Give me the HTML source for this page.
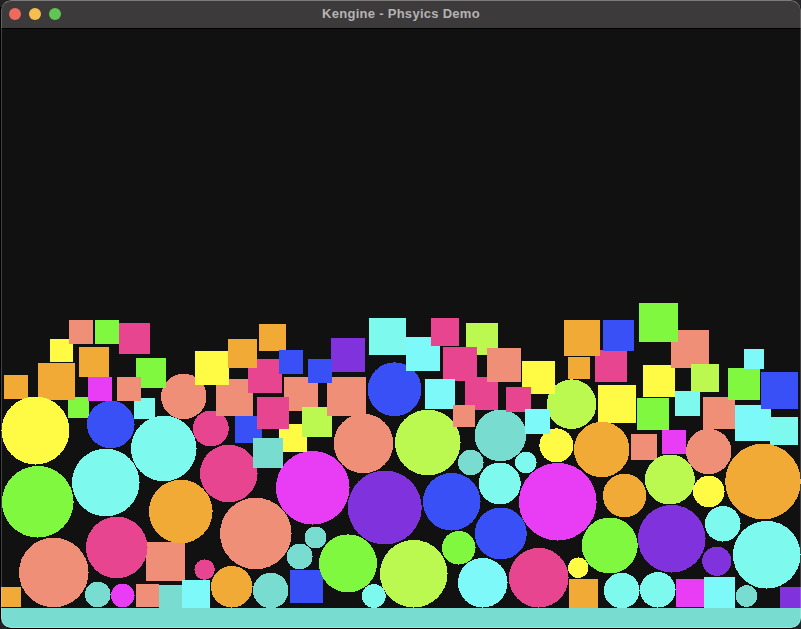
<!DOCTYPE html>
<html><head><meta charset="utf-8"><title>Kengine - Phsyics Demo</title>
<style>
html,body{margin:0;padding:0;background:#000;}
.cn{position:absolute;width:7px;height:7px;background:#222224;}
body{width:801px;height:629px;overflow:hidden;position:relative;font-family:"Liberation Sans",sans-serif;}
.win{position:absolute;left:1px;top:0;width:800px;height:628px;border-radius:10px;background:#111111;overflow:hidden;}
.bar{position:absolute;left:0;top:0;width:100%;height:28px;background:#3c3a3b;border-bottom:1px solid #000;box-sizing:content-box;}
.tl{position:absolute;top:8px;width:12px;height:12px;border-radius:50%;}
.title{position:absolute;left:0;top:0;width:100%;height:28px;line-height:27px;text-align:center;color:#b5b3b4;font-weight:bold;font-size:13px;letter-spacing:0.28px;}
.ground{position:absolute;left:0;top:608px;width:100%;height:20px;background:#78dcd0;}
.edge{position:absolute;left:0;top:0;width:100%;height:100%;box-sizing:border-box;border-radius:10px;border:1px solid rgba(255,255,255,0.2);border-top-color:rgba(255,255,255,0.33);border-bottom-color:rgba(255,255,255,0.3);pointer-events:none;}
svg{position:absolute;left:0;top:0;}
</style></head><body>
<div class="cn" style="left:0;top:0"></div><div class="cn" style="left:794px;top:0;background:#25272b"></div><div class="cn" style="left:0;top:622px"></div><div class="cn" style="left:794px;top:622px"></div>
<div class="win">
<svg width="801" height="629" viewBox="1 0 801 629" shape-rendering="crispEdges">
<circle cx="183.75" cy="396.5" r="22.75" fill="#ef8f78"/>
<circle cx="210.75" cy="428.5" r="18" fill="#e84590"/>
<rect x="50" y="339" width="23" height="23" fill="#fffb45"/>
<rect x="69" y="320" width="24" height="24" fill="#ef8f78"/>
<rect x="95" y="320" width="24" height="24" fill="#80f840"/>
<rect x="119" y="323" width="31" height="31" fill="#e84590"/>
<rect x="79" y="347" width="30" height="30" fill="#f0aa35"/>
<rect x="68" y="397" width="21" height="21" fill="#80f840"/>
<rect x="38" y="363" width="37" height="37" fill="#f0aa35"/>
<rect x="4" y="375" width="24" height="24" fill="#f0aa35"/>
<rect x="88" y="377" width="24" height="24" fill="#e83cf5"/>
<rect x="136" y="358" width="30" height="30" fill="#80f840"/>
<rect x="134" y="398" width="21" height="21" fill="#7ef9ee"/>
<rect x="117" y="377" width="24" height="24" fill="#ef8f78"/>
<rect x="259" y="324" width="27" height="27" fill="#f0aa35"/>
<rect x="216" y="379" width="37" height="37" fill="#ef8f78"/>
<rect x="195" y="351" width="34" height="34" fill="#fffb45"/>
<rect x="284" y="377" width="34" height="34" fill="#ef8f78"/>
<rect x="248" y="359" width="34" height="34" fill="#e84590"/>
<rect x="228" y="339" width="29" height="29" fill="#f0aa35"/>
<rect x="279" y="350" width="24" height="24" fill="#3850f5"/>
<rect x="331" y="338" width="34" height="34" fill="#8033dc"/>
<rect x="369" y="318" width="37" height="37" fill="#7ef9ee"/>
<rect x="235" y="416" width="27" height="27" fill="#3850f5"/>
<rect x="279" y="424" width="28" height="28" fill="#fffb45"/>
<rect x="257" y="397" width="32" height="32" fill="#e84590"/>
<rect x="302" y="407" width="30" height="30" fill="#bbf950"/>
<rect x="327" y="377" width="39" height="39" fill="#ef8f78"/>
<rect x="308" y="359" width="24" height="24" fill="#3850f5"/>
<rect x="431" y="318" width="28" height="28" fill="#e84590"/>
<rect x="466" y="323" width="32" height="32" fill="#bbf950"/>
<rect x="443" y="347" width="34" height="34" fill="#e84590"/>
<rect x="465" y="377" width="33" height="33" fill="#e84590"/>
<rect x="487" y="348" width="34" height="34" fill="#ef8f78"/>
<rect x="425" y="379" width="30" height="30" fill="#7df9f9"/>
<rect x="568" y="357" width="22" height="22" fill="#f0aa35"/>
<rect x="643" y="365" width="32" height="32" fill="#fffb45"/>
<rect x="671" y="330" width="38" height="38" fill="#ef8f78"/>
<rect x="639" y="303" width="39" height="39" fill="#80f840"/>
<rect x="595" y="350" width="32" height="32" fill="#e84590"/>
<rect x="603" y="320" width="31" height="31" fill="#3850f5"/>
<rect x="564" y="320" width="36" height="36" fill="#f0aa35"/>
<rect x="691" y="364" width="28" height="28" fill="#bbf950"/>
<rect x="598" y="385" width="38" height="38" fill="#fffb45"/>
<rect x="637" y="398" width="32" height="32" fill="#80f840"/>
<rect x="675" y="391" width="25" height="25" fill="#7ef9ee"/>
<rect x="703" y="397" width="32" height="32" fill="#ef8f78"/>
<rect x="728" y="368" width="32" height="32" fill="#80f840"/>
<rect x="744" y="349" width="20" height="20" fill="#7df9f9"/>
<rect x="735" y="405" width="36" height="36" fill="#7df9f9"/>
<rect x="761" y="372" width="37" height="37" fill="#3850f5"/>
<rect x="770" y="417" width="28" height="28" fill="#7ef9ee"/>
<rect x="631" y="434" width="26" height="26" fill="#ef8f78"/>
<rect x="662" y="430" width="24" height="24" fill="#e83cf5"/>
<rect x="1" y="587" width="20" height="20" fill="#f0aa35"/>
<rect x="146" y="542" width="39" height="39" fill="#ef8f78"/>
<rect x="136" y="584" width="23" height="23" fill="#ef8f78"/>
<rect x="159" y="585" width="23" height="23" fill="#78dcd0"/>
<rect x="182" y="580" width="28" height="28" fill="#7df9f9"/>
<rect x="290" y="570" width="33" height="33" fill="#3850f5"/>
<rect x="569" y="579" width="29" height="29" fill="#f0aa35"/>
<rect x="676" y="579" width="28" height="28" fill="#e83cf5"/>
<rect x="704" y="577" width="31" height="31" fill="#7df9f9"/>
<rect x="780" y="587" width="21" height="21" fill="#8033dc"/>
<circle cx="35.5" cy="430.5" r="34" fill="#fffb45"/>
<circle cx="110.75" cy="424.5" r="23.8" fill="#3850f5"/>
<circle cx="163.75" cy="448.5" r="32.8" fill="#7ef9ee"/>
<circle cx="394.6" cy="389.3" r="26.9" fill="#3850f5"/>
<circle cx="363.5" cy="443.5" r="29.8" fill="#ef8f78"/>
<circle cx="500.4" cy="435.4" r="25.8" fill="#78dcd0"/>
<circle cx="571.6" cy="404.2" r="24.8" fill="#bbf950"/>
<circle cx="556.4" cy="445.4" r="17" fill="#fffb45"/>
<circle cx="601.75" cy="449.5" r="27.75" fill="#f0aa35"/>
<circle cx="708.75" cy="451.5" r="22.7" fill="#ef8f78"/>
<circle cx="37.75" cy="501.75" r="35.8" fill="#80f840"/>
<circle cx="105.75" cy="482.5" r="33.8" fill="#7ef9ee"/>
<circle cx="180.75" cy="511.5" r="31.8" fill="#f0aa35"/>
<circle cx="116.75" cy="547.5" r="30.8" fill="#e84590"/>
<circle cx="53.75" cy="572.5" r="34.8" fill="#ef8f78"/>
<circle cx="97.75" cy="594.5" r="12.8" fill="#78dcd0"/>
<circle cx="122.75" cy="595.5" r="11.8" fill="#e83cf5"/>
<circle cx="228.75" cy="473.5" r="28.8" fill="#e84590"/>
<circle cx="312.75" cy="487.75" r="36.8" fill="#e83cf5"/>
<circle cx="384.75" cy="507.5" r="37" fill="#8033dc"/>
<circle cx="255.75" cy="533.5" r="35.8" fill="#ef8f78"/>
<circle cx="315.5" cy="537.6" r="10.9" fill="#78dcd0"/>
<circle cx="299.7" cy="556.5" r="12.9" fill="#78dcd0"/>
<circle cx="348" cy="563.4" r="29" fill="#80f840"/>
<circle cx="204.6" cy="569.6" r="10.25" fill="#e84590"/>
<circle cx="231.75" cy="586.75" r="20.8" fill="#f0aa35"/>
<circle cx="270.75" cy="590.5" r="17.75" fill="#78dcd0"/>
<circle cx="373.75" cy="596" r="11.9" fill="#7ef9ee"/>
<circle cx="427.75" cy="442.5" r="32.8" fill="#bbf950"/>
<circle cx="470.75" cy="462.5" r="12.8" fill="#78dcd0"/>
<circle cx="525.75" cy="462.5" r="10.8" fill="#7ef9ee"/>
<circle cx="451.75" cy="501.75" r="28.8" fill="#3850f5"/>
<circle cx="499.75" cy="483.5" r="21" fill="#7ef9ee"/>
<circle cx="557.75" cy="501.75" r="38.8" fill="#e83cf5"/>
<circle cx="500.75" cy="533.5" r="26" fill="#3850f5"/>
<circle cx="458.75" cy="547.75" r="16.8" fill="#80f840"/>
<circle cx="413.75" cy="573.75" r="33.8" fill="#bbf950"/>
<circle cx="482.75" cy="582.75" r="24.8" fill="#7df9f9"/>
<circle cx="538.75" cy="577.75" r="29.8" fill="#e84590"/>
<circle cx="578.25" cy="567.75" r="10.3" fill="#fffb45"/>
<circle cx="763" cy="481.5" r="37.8" fill="#f0aa35"/>
<circle cx="624.6" cy="495.5" r="21.7" fill="#f0aa35"/>
<circle cx="669.9" cy="479.5" r="25" fill="#bbf950"/>
<circle cx="708.75" cy="491.5" r="15.8" fill="#fffb45"/>
<circle cx="609.75" cy="545.5" r="28" fill="#80f840"/>
<circle cx="671.75" cy="538.75" r="33.8" fill="#8033dc"/>
<circle cx="722.75" cy="523.75" r="17.8" fill="#7ef9ee"/>
<circle cx="716.75" cy="561.25" r="14.6" fill="#8033dc"/>
<circle cx="766.75" cy="554.75" r="33.8" fill="#7ef9ee"/>
<circle cx="621.75" cy="590.5" r="17.8" fill="#7ef9ee"/>
<circle cx="657.75" cy="589.75" r="17.8" fill="#7ef9ee"/>
<circle cx="746.6" cy="596.1" r="10.8" fill="#78dcd0"/>
<rect x="253" y="438" width="30" height="30" fill="#78dcd0"/>
<rect x="406" y="337" width="34" height="34" fill="#7df9f9"/>
<rect x="431" y="318" width="28" height="28" fill="#e84590"/>
<rect x="453" y="405" width="22" height="22" fill="#ef8f78"/>
<rect x="522" y="361" width="33" height="33" fill="#fffb45"/>
<rect x="506" y="387" width="25" height="25" fill="#e84590"/>
<rect x="525" y="409" width="25" height="25" fill="#7df9f9"/>
</svg>
<div class="ground"></div>
<div class="bar"></div>
<div class="tl" style="left:8px;background:#ec6a5e"></div>
<div class="tl" style="left:28px;background:#f4bf4f"></div>
<div class="tl" style="left:48px;background:#61c554"></div>
<div class="title">Kengine - Phsyics Demo</div>
<div class="edge"></div>
</div>
</body></html>
